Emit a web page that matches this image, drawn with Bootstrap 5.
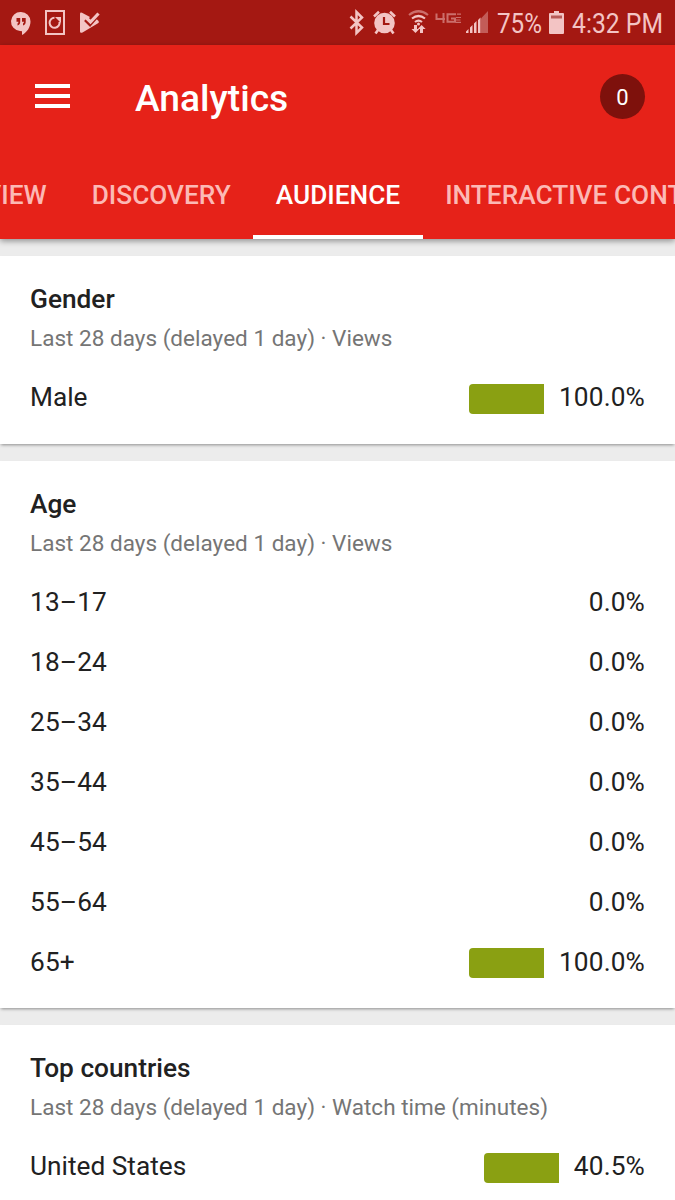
<!DOCTYPE html>
<html lang="en">
<head>
<meta charset="utf-8">
<meta name="viewport" content="width=device-width, initial-scale=1">
<title>Analytics</title>
<link href="https://cdn.jsdelivr.net/npm/bootstrap@5.3.0/dist/css/bootstrap.min.css" rel="stylesheet">
<style>
  body { font-family: Roboto, "Liberation Sans", sans-serif; background: #ececec; color: #212121; height: 1200px; overflow: hidden; }
  svg { display: block; flex: none; overflow: visible; }
  .status { height: 45px; background: #a41812; color: #f3c4c4; padding: 0 11px 0 10px; }
  .status svg { fill: currentColor; }
  .status text { font-size: 28.5px; }
  .app-head { background: #e62219; height: 194px; box-shadow: 0 2px 6px rgba(0,0,0,.4); }
  .top-row { height: 103px; padding: 0 30px 0 35px; }
  .app-title { font-size: 37.2px; font-weight: 500; line-height: 44px; margin: 3px 0 0 65px; }
  .avatar { width: 45px; height: 45px; background: #7e110c; font-size: 22px; padding-top: 2px; }
  .tabs { height: 91px; margin-left: -104px; }
  .tabs .nav-link { padding: 0 22.5px; height: 91px; line-height: 94px; font-size: 26.25px; font-weight: 500; color: #fcb9b5; white-space: nowrap; border-radius: 0; }
  .tabs .nav-link.active { color: #fff; border-bottom: 4px solid #fff; }
  .panel { border: 0; border-radius: 0; background: #fff; color: #212121; padding: 27px 30px 15px; margin-bottom: 17px; box-shadow: 0 2px 3px -1px rgba(0,0,0,.4); }
  .panel h2 { font-size: 26.25px; font-weight: 500; line-height: 32px; margin: 0; }
  .sub { font-size: 22.5px; line-height: 30px; margin: 8px 0 15.5px; color: #757575; letter-spacing: .02px; }
  .stat { height: 60px; font-size: 26.25px; line-height: 56px; }
  .stat span { margin-top: -3px; }
  .num { letter-spacing: .15px; }
  .meter { width: 75px; height: 30px; background: #8aa012; border-radius: 4px 0 0 4px; margin-right: 15px; }
</style>
</head>
<body>
<div class="status d-flex align-items-center">
  <svg width="22" height="45"><path d="M11 12a9.500 9.500 0 0 0-1 19l2 .2V35c5-2.500 8.500-8 8.500-13.500A9.500 9.500 0 0 0 11 12z"/><path fill="#a41812" d="M6.500 18h3.700v4c0 2-1 3-2.700 3.500v-2q1-.5 1-1.700h-2zM12 18h3.700v4c0 2-1 3-2.700 3.500v-2q1-.5 1-1.700h-2z"/></svg>
  <svg width="21" height="45" style="margin-left:13px"><g fill="none" stroke="currentColor"><rect x="1" y="11" width="18" height="23" stroke-width="2"/><path d="M9.500 17.800a5 5 0 1 0 5 4" stroke-width="2"/></g><path d="M10 17h6v6z"/></svg>
  <svg width="21" height="45" style="margin-left:14px"><path d="M0 14q0-2 2-1.200L10 17l-4.500 4.500 4 4L16.500 19l2 2q1.200 1.300-.5 2.300L2.500 32.500Q0 33.500 0 31.500z"/><path d="m5.500 19.500 4.500 4.500L17 16" fill="none" stroke="#a41812" stroke-width="4"/><path d="m6 17.500 4.500 4.500 8-8.500" fill="none" stroke="currentColor" stroke-width="3.200"/></svg>
  <svg class="ms-auto" width="16" height="45"><path d="m1.500 16.500 11.500 11-5.500 5.500V12l5.500 5.500-11.500 11" fill="none" stroke="currentColor" stroke-width="2.500"/></svg>
  <svg width="25" height="45" style="margin-left:8px"><circle cx="11.500" cy="23" r="10.300"/><path d="M11 17v7h5.500" fill="none" stroke="#a41812" stroke-width="2.200"/><path d="m1 16.500 5-4.700M22 16.500l-5-4.700M5 30l-2.500 3.500M18 30l2.500 3.500" fill="none" stroke="currentColor" stroke-width="2.600"/></svg>
  <svg width="22" height="45" style="margin-left:10px"><g fill="none" stroke="currentColor" stroke-width="2.200"><path d="M1 15Q10.500 7.500 20 15" opacity=".5"/><path d="M4 18.500Q10.500 13.500 17 18.500M7 22q3.500-2.700 7 0"/></g><circle cx="10.500" cy="24" r="1.500"/><path d="M6 25h3v4h2.300L7.500 33 3.500 29H6zM12 33v-4H9.800l3.800-4 4 4H15v4z"/></svg>
  <svg width="28" height="45" style="margin-left:5px" opacity=".5"><path d="M1.500 13.500V19H10M8.500 13v10M21 14.200h-8.500v7.600H20V18.500h-4" fill="none" stroke="currentColor" stroke-width="2"/><path d="M21 17.500h5M21 20h4.500M20.500 22.300H26M22 14.200h4" fill="none" stroke="currentColor" stroke-width="1.200"/></svg>
  <svg width="23" height="45" style="margin-left:3px"><path d="M15 18.500 22 11v22h-7z" opacity=".4"/><path d="M0 33v-1.500l2.500-2.500v4zM4 33v-5.500L6.500 25v8zM8 33v-9.500l2.500-2.500v12zM12 33V20l2.500-2.500V33z"/></svg>
  <svg width="46" height="45" style="margin-left:8px"><text x="0" y="33" textLength="45" lengthAdjust="spacingAndGlyphs">75%</text></svg>
  <svg width="16" height="45" style="margin-left:6px"><path d="M5 11h5v2h4q1 0 1 1v19q0 1-1 1H1q-1 0-1-1V14q0-1 1-1h4z"/><path d="M2 15.500h11v3H2z" fill="#b95a57"/></svg>
  <svg width="92" height="45" style="margin-left:7px"><text x="0" y="33" textLength="91" lengthAdjust="spacingAndGlyphs">4:32 PM</text></svg>
</div>
<header class="app-head position-relative text-white">
  <div class="top-row d-flex align-items-center">
    <svg width="35" height="25" fill="#fff"><path d="M0 0h35v4H0zM0 10h35v4H0zM0 20h35v4H0z"/></svg>
    <h1 class="app-title">Analytics</h1>
    <div class="avatar rounded-circle ms-auto d-flex align-items-center justify-content-center">0</div>
  </div>
  <div class="overflow-hidden">
    <nav class="tabs nav flex-nowrap">
      <a class="nav-link" href="#">OVERVIEW</a>
      <a class="nav-link" href="#">DISCOVERY</a>
      <a class="nav-link active" href="#">AUDIENCE</a>
      <a class="nav-link" href="#">INTERACTIVE CONTENT</a>
    </nav>
  </div>
</header>
<main style="padding-top:17px">
  <section class="card panel">
    <h2>Gender</h2>
    <p class="sub">Last 28 days (delayed 1 day) · Views</p>
    <div class="stat d-flex align-items-center"><span class="me-auto">Male</span><div class="meter"></div><span class="num">100.0%</span></div>
  </section>
  <section class="card panel">
    <h2>Age</h2>
    <p class="sub">Last 28 days (delayed 1 day) · Views</p>
    <div class="stat num d-flex align-items-center justify-content-between"><span>13–17</span><span>0.0%</span></div>
    <div class="stat num d-flex align-items-center justify-content-between"><span>18–24</span><span>0.0%</span></div>
    <div class="stat num d-flex align-items-center justify-content-between"><span>25–34</span><span>0.0%</span></div>
    <div class="stat num d-flex align-items-center justify-content-between"><span>35–44</span><span>0.0%</span></div>
    <div class="stat num d-flex align-items-center justify-content-between"><span>45–54</span><span>0.0%</span></div>
    <div class="stat num d-flex align-items-center justify-content-between"><span>55–64</span><span>0.0%</span></div>
    <div class="stat num d-flex align-items-center"><span class="me-auto">65+</span><div class="meter"></div><span>100.0%</span></div>
  </section>
  <section class="card panel">
    <h2>Top countries</h2>
    <p class="sub">Last 28 days (delayed 1 day) · Watch time (minutes)</p>
    <div class="stat d-flex align-items-center"><span class="me-auto">United States</span><div class="meter"></div><span class="num">40.5%</span></div>
  </section>
</main>
<script src="https://cdn.jsdelivr.net/npm/bootstrap@5.3.0/dist/js/bootstrap.bundle.min.js"></script>
</body>
</html>
